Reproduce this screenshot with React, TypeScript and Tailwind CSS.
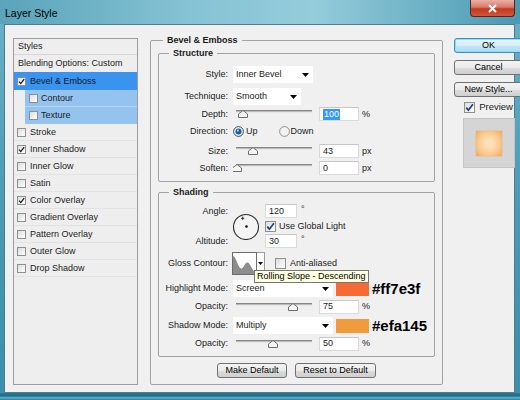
import React from "react";

const F = "font-['Liberation_Sans',Arial,sans-serif]";

function Box({ checked, big }: { checked?: boolean; big?: boolean }) {
  return (
    <span
      className={`${big ? "w-[11px] h-[11px]" : "w-[9px] h-[9px]"} shrink-0 border border-[#8f8f8f] bg-[linear-gradient(135deg,#dcdcdc,#ffffff)] flex items-center justify-center`}
    >
      {checked &&
        (big ? (
          <svg width="9" height="9" viewBox="0 0 9 9">
            <path d="M1.3 4.6 L3.4 7.2 L7.9 1.2" fill="none" stroke="#1f3a8a" strokeWidth="1.7" />
          </svg>
        ) : (
          <svg width="7" height="7" viewBox="0 0 7 7">
            <path d="M1 3.6 L2.8 5.6 L6.2 1.1" fill="none" stroke="#1a1a1a" strokeWidth="1.3" />
          </svg>
        ))}
    </span>
  );
}

function Radio({ on }: { on?: boolean }) {
  return (
    <svg width="11" height="11" viewBox="0 0 11 11" className="shrink-0">
      <circle cx="5.5" cy="5.5" r="4.9" fill="#f3f3f3" stroke={on ? "#2d4d72" : "#8e8f8f"} />
      {on && (
        <>
          <circle cx="5.5" cy="5.5" r="3" fill="#1b5aa5" />
          <circle cx="4.9" cy="4.6" r="1.1" fill="#a8d4ff" />
        </>
      )}
    </svg>
  );
}

function Slider({ pos }: { pos: number }) {
  return (
    <svg width="82" height="16" viewBox="0 0 82 16" className="shrink-0">
      <rect x="3" y="4" width="76" height="1" fill="#858585" />
      <rect x="3" y="5" width="76" height="1" fill="#bcbcbc" />
      <rect x="3" y="6" width="76" height="1" fill="#e8e8e8" />
      <path
        d={`M${pos - 4.5} 11.5 L${pos - 4.5} 8 L${pos} 4.5 L${pos + 4.5} 8 L${pos + 4.5} 11.5 Z`}
        fill="#f5f5f5"
        stroke="#6e6e6e"
      />
    </svg>
  );
}

function Select({ cls, label }: { cls: string; label: string }) {
  return (
    <div className={`${cls} h-[17px] shrink-0 bg-white flex items-center justify-between pl-[3px] pr-[4px]`}>
      <span>{label}</span>
      <svg width="7" height="4" viewBox="0 0 7 4">
        <path d="M0 0H7L3.5 4Z" fill="#000" />
      </svg>
    </div>
  );
}

function Field({ cls, children }: { cls: string; children: React.ReactNode }) {
  return (
    <div className={`${cls} h-[14px] shrink-0 bg-white border border-[#dadada] border-t-[#c6c6c6] flex items-center pl-[3px]`}>
      {children}
    </div>
  );
}

function Btn({ cls, children, ok }: { cls: string; children: React.ReactNode; ok?: boolean }) {
  return (
    <div
      className={`${cls} h-[15px] rounded-[3px] border ${
        ok
          ? "border-[#3c8fc1] bg-[linear-gradient(180deg,#e6f5fc_0%,#d6eefa_50%,#c2e6f8_51%,#addcf3_100%)] shadow-[inset_0_0_0_1px_#8fdcfb]"
          : "border-[#707070] bg-[linear-gradient(180deg,#f3f3f3_0%,#ebebeb_50%,#dddddd_51%,#cfcfcf_100%)]"
      } flex items-center justify-center text-black`}
    >
      {children}
    </div>
  );
}

function Label({ children }: { children: React.ReactNode }) {
  return <div className="w-[62px] shrink-0 flex justify-end whitespace-nowrap">{children}</div>;
}

const listItems: { label: string; checked?: boolean }[] = [
  { label: "Stroke" },
  { label: "Inner Shadow", checked: true },
  { label: "Inner Glow" },
  { label: "Satin" },
  { label: "Color Overlay", checked: true },
  { label: "Gradient Overlay" },
  { label: "Pattern Overlay" },
  { label: "Outer Glow" },
  { label: "Drop Shadow" },
];

export default function App() {
  return (
    <div
      className={`${F} w-[520px] h-[400px] overflow-hidden flex flex-col bg-[linear-gradient(180deg,#6ab3c8_0%,#4a9bb5_50%,#3a8ea9_100%)] text-[9px] leading-none text-[#1b1b1b]`}
    >
      {/* Title bar */}
      <div className="h-[24px] shrink-0 flex items-start justify-between bg-[linear-gradient(90deg,#5aa3ba_0%,#84c2d3_35%,#95ccdb_60%,#66adc2_85%,#4b98b1_100%)]">
        <div className="pl-[5px] pt-[8px] text-[10.5px] text-black">Layer Style</div>
        <div className="mr-[5px] w-[45px] h-[17px] rounded-b-[4px] border border-t-0 border-[#5b2418] bg-[linear-gradient(180deg,#eab0a4_0%,#d8786a_45%,#c13a20_55%,#d2563a_100%)] flex items-center justify-center">
          <svg width="11" height="9" viewBox="0 0 11 9">
            <path d="M2 1 L9 8 M9 1 L2 8" stroke="#fff" strokeWidth="2" />
          </svg>
        </div>
      </div>

      {/* Client area */}
      <div className="ml-[4px] mr-[5px] h-[369px] shrink-0 border border-[#4f7a90] bg-[#f0f0f0] flex items-start pt-[9px] pl-[8px]">
        {/* Styles list */}
        <div className="mt-[4px] w-[125px] h-[347px] shrink-0 border border-[#9c9c9c] bg-[#eeeeee] flex flex-col">
          <div className="h-[16px] border-b border-[#d6d6d6] flex items-center pl-[4px]">Styles</div>
          <div className="h-[17px] flex items-center pl-[4px]">Blending Options: Custom</div>
          <div className="h-[18px] bg-[#3a93ee] flex items-center pl-[3px] gap-[4px] text-[#0c1a33]">
            <Box checked />
            <span>Bevel &amp; Emboss</span>
          </div>
          <div className="ml-[11px] h-[17px] bg-[#94c3ef] border-b border-[#b4d5f3] flex items-center pl-[4px] gap-[3px]">
            <Box />
            <span>Contour</span>
          </div>
          <div className="ml-[11px] h-[17px] bg-[#94c3ef] flex items-center pl-[4px] gap-[3px]">
            <Box />
            <span>Texture</span>
          </div>
          {listItems.map((it) => (
            <div key={it.label} className="h-[17px] border-b border-[#e2e2e2] flex items-center pl-[3px] gap-[4px]">
              <Box checked={it.checked} />
              <span>{it.label}</span>
            </div>
          ))}
        </div>

        {/* Bevel & Emboss */}
        <fieldset className="ml-[12px] w-[276px] shrink-0 border border-[#a3a3a3] rounded-[2px] px-[7px] pb-[6px]">
          <legend className="ml-[5px] px-[4px] font-bold leading-[12px]">Bevel &amp; Emboss</legend>

          {/* Structure */}
          <fieldset className="mt-[1px] border border-[#a3a3a3] rounded-[2px] px-[7px] pt-[7px] pb-[5px]">
            <legend className="ml-[3px] px-[4px] font-bold leading-[12px]">Structure</legend>
            <div className="flex items-center h-[17px]">
              <Label>Style:</Label>
              <Select cls="ml-[5px] w-[80px]" label="Inner Bevel" />
            </div>
            <div className="flex items-center h-[17px] mt-[5px]">
              <Label>Technique:</Label>
              <Select cls="ml-[5px] w-[68px]" label="Smooth" />
            </div>
            <div className="flex items-center h-[16px] mt-[1px]">
              <Label>Depth:</Label>
              <div className="ml-[5px] flex">
                <Slider pos={10} />
              </div>
              <Field cls="ml-[4px] w-[40px]">
                <span className="bg-[#3399ff] text-white px-[1px] leading-[11px]">100</span>
              </Field>
              <span className="ml-[3px]">%</span>
            </div>
            <div className="flex items-center h-[15px] mt-[2px]">
              <Label>Direction:</Label>
              <div className="ml-[5px] flex items-center">
                <Radio on />
                <span className="ml-[2px]">Up</span>
                <span className="ml-[21px] flex">
                  <Radio />
                </span>
                <span className="ml-[1px]">Down</span>
              </div>
            </div>
            <div className="flex items-center h-[16px] mt-[4px]">
              <Label>Size:</Label>
              <div className="ml-[5px] flex">
                <Slider pos={20} />
              </div>
              <Field cls="ml-[4px] w-[40px]">43</Field>
              <span className="ml-[3px]">px</span>
            </div>
            <div className="flex items-center h-[16px] mt-[1px]">
              <Label>Soften:</Label>
              <div className="ml-[5px] flex">
                <Slider pos={4} />
              </div>
              <Field cls="ml-[4px] w-[40px]">0</Field>
              <span className="ml-[3px]">px</span>
            </div>
          </fieldset>

          {/* Shading */}
          <fieldset className="mt-[4px] border border-[#a3a3a3] rounded-[2px] px-[7px] pb-[5px]">
            <legend className="ml-[3px] px-[4px] font-bold leading-[12px]">Shading</legend>
            <div className="flex mt-[6px] h-[44px]">
              <div className="w-[62px] shrink-0 flex flex-col justify-between text-right">
                <div className="h-[14px] leading-[14px]">Angle:</div>
                <div className="h-[14px] leading-[14px]">Altitude:</div>
              </div>
              <div className="ml-[4px] flex items-center">
                <svg width="28" height="28" viewBox="0 0 28 28">
                  <circle cx="14" cy="15" r="12.5" fill="#f4f4f4" stroke="#2a2a2a" strokeWidth="1.1" />
                  <circle cx="14.5" cy="14.5" r="1.3" fill="#111" />
                  <path d="M10.7 4.6 V8 M9 6.3 H12.4" stroke="#111" strokeWidth="0.8" />
                </svg>
              </div>
              <div className="ml-[5px] flex flex-col justify-between">
                <div className="flex items-center">
                  <Field cls="w-[32px]">120</Field>
                  <span className="ml-[4px] -mt-[4px]">°</span>
                </div>
                <div className="flex items-center h-[11px]">
                  <Box checked big />
                  <span className="ml-[3px]">Use Global Light</span>
                </div>
                <div className="flex items-center">
                  <Field cls="w-[32px]">30</Field>
                  <span className="ml-[4px] -mt-[4px]">°</span>
                </div>
              </div>
            </div>

            <div className="flex items-center h-[23px] mt-[4px]">
              <Label>Gloss Contour:</Label>
              <div className="ml-[4px] relative flex h-[23px]">
                <div className="w-[25px] h-[23px] border border-[#6d6d6d] bg-white">
                  <svg width="23" height="21" viewBox="0 0 23 21">
                    <path
                      d="M0 21 L0 3 C3 3 5 15 8 15.5 C11 16 11.5 9 14.5 9.5 C17.5 10 19 18.5 23 19.5 L23 21 Z"
                      fill="#8d8d8d"
                    />
                  </svg>
                </div>
                <div className="w-[8px] h-[23px] border border-l-0 border-[#9a9a9a] bg-white flex items-center justify-center">
                  <svg width="5" height="3" viewBox="0 0 5 3">
                    <path d="M0 0H5L2.5 3Z" fill="#000" />
                  </svg>
                </div>
                <div className="absolute left-[22px] top-[18px] z-10 whitespace-nowrap bg-[#ffffe1] border border-[#767676] px-[2px] h-[13px] leading-[11px] text-black">
                  Rolling Slope - Descending
                </div>
              </div>
              <div className="ml-[10px] flex items-center">
                <Box big />
                <span className="ml-[4px]">Anti-aliased</span>
              </div>
            </div>

            <div className="flex items-center h-[17px] mt-[5px]">
              <Label>Highlight Mode:</Label>
              <Select cls="ml-[5px] w-[100px]" label="Screen" />
              <div className="ml-[3px] w-[33px] h-[14px] shrink-0 bg-[#f76a33]" />
              <span className="ml-[3px] text-[15px] font-bold text-black">#ff7e3f</span>
            </div>
            <div className="flex items-center h-[15px] mt-[2px]">
              <Label>Opacity:</Label>
              <div className="ml-[5px] flex">
                <Slider pos={60} />
              </div>
              <Field cls="ml-[4px] w-[40px]">75</Field>
              <span className="ml-[3px]">%</span>
            </div>
            <div className="flex items-center h-[17px] mt-[3px]">
              <Label>Shadow Mode:</Label>
              <Select cls="ml-[5px] w-[100px]" label="Multiply" />
              <div className="ml-[3px] w-[33px] h-[14px] shrink-0 bg-[#f09c3c]" />
              <span className="ml-[3px] text-[15px] font-bold text-black">#efa145</span>
            </div>
            <div className="flex items-center h-[15px] mt-[2px]">
              <Label>Opacity:</Label>
              <div className="ml-[5px] flex">
                <Slider pos={40} />
              </div>
              <Field cls="ml-[4px] w-[40px]">50</Field>
              <span className="ml-[3px]">%</span>
            </div>
          </fieldset>

          <div className="mt-[6px] flex justify-center gap-[8px]">
            <Btn cls="w-[70px]">Make Default</Btn>
            <Btn cls="w-[81px]">Reset to Default</Btn>
          </div>
        </fieldset>

        {/* Right column */}
        <div className="ml-[11px] mt-[4px] w-[69px] shrink-0 flex flex-col items-center">
          <Btn cls="w-[69px]" ok>
            OK
          </Btn>
          <Btn cls="w-[69px] mt-[7px]">Cancel</Btn>
          <Btn cls="w-[69px] mt-[7px]">New Style...</Btn>
          <div className="mt-[4px] h-[12px] flex items-center">
            <Box checked big />
            <span className="ml-[4px] text-[9.5px]">Preview</span>
          </div>
          <div className="mt-[5px] w-[52px] h-[50px] bg-[#d5d5d5] border border-[#c4c4c4] flex items-center justify-center">
            <div className="w-[26px] h-[25px] bg-[radial-gradient(circle,#fde0bb_20%,#fbc98e_60%,#f1a959_100%)] shadow-[0_0_1px_#e39a4a]" />
          </div>
        </div>
      </div>

      {/* Bottom frame */}
      <div className="flex-1 bg-[linear-gradient(180deg,#2c7b94_0%,#1f6a84_40%,#5cb6d1_70%,#2a7892_100%)]" />
    </div>
  );
}
